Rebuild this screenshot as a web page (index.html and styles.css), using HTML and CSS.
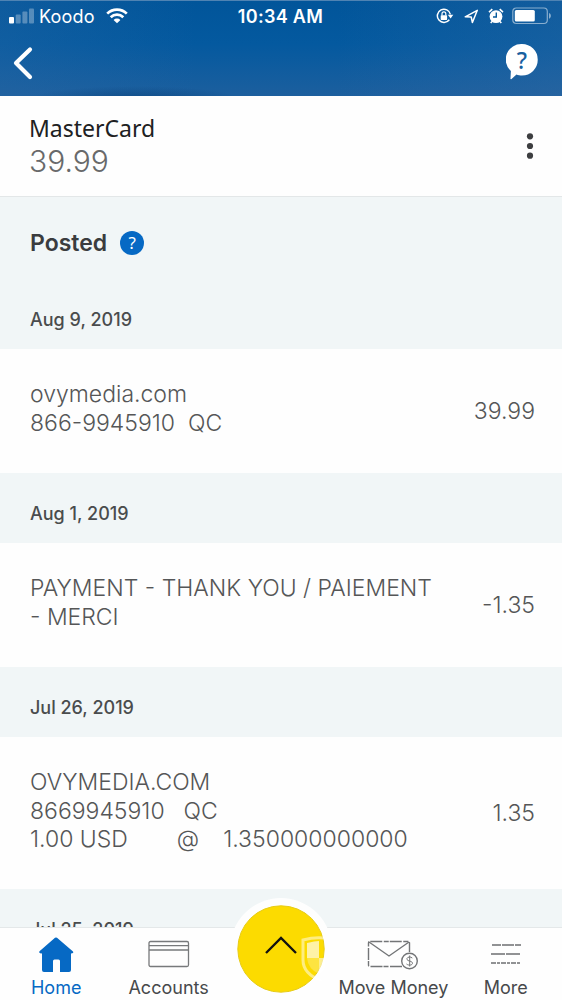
FILE: index.html
```html
<!DOCTYPE html>
<html lang="en">
<head>
<meta charset="utf-8">
<title>MasterCard</title>
<link rel="stylesheet" href="styles.css">
</head>
<body>
<div class="phone">
  <header class="top">
    <div class="status">
      <div class="carrier">
        <svg width="26" height="16" viewBox="0 0 26 16"><g fill="#fff"><rect y="9" width="5" height="6.500" rx="1"/><g opacity=".3"><rect x="6.700" y="6.500" width="5" height="9" rx="1"/><rect x="13.400" y="3.500" width="5" height="12" rx="1"/><rect x="20" y="0.500" width="5" height="15" rx="1"/></g></g></svg>
        <span class="network">Koodo</span>
        <svg class="wifi" width="22" height="16" viewBox="0 0 22 16" fill="none" stroke="#fff" stroke-width="2.700"><path d="M1.200 5.600a14 14 0 0 1 19.600 0M4.700 9.200a9 9 0 0 1 12.600 0"/><path d="M11 15.300 7.600 12a4.800 4.800 0 0 1 6.800 0z" fill="#fff" stroke="none"/></svg>
      </div>
      <time class="clock">10:34 AM</time>
      <div class="indicators">
        <svg width="18" height="16" viewBox="0 0 18 16"><path d="M13.300 11.700A6.600 6.600 0 1 1 14.400 6.300" fill="none" stroke="#fff" stroke-width="1.500"/><path d="M11.800 6.800h5.500l-2.700 3.600z" fill="#fff"/><rect x="4.700" y="7.200" width="6.400" height="4.700" rx=".6" fill="#fff"/><path d="M6 7.500V5.700a1.900 1.900 0 0 1 3.800 0v1.800" fill="none" stroke="#fff" stroke-width="1.200"/></svg>
        <svg class="arrow" width="15" height="15" viewBox="0 0 15 15" fill="none" stroke="#fff" stroke-width="1.500" stroke-linejoin="round"><path d="M1.200 7.800 13.300 1.300 8.400 13.500 7.200 8z"/></svg>
        <svg class="alarm" width="16" height="16" viewBox="0 0 16 16"><circle cx="8" cy="8.600" r="6.400" fill="#fff"/><path d="M1 4.200 4.300 1.200M11.700 1.200 15 4.200M4 13.400l-1.300 1.500M12 13.400l1.300 1.500" stroke="#fff" stroke-width="1.600"/><path d="M8.300 4.500V9H5" fill="none" stroke="#075a9c" stroke-width="1.400"/></svg>
        <svg width="40" height="18" viewBox="0 0 40 18"><rect x=".8" y="1" width="34.500" height="15.500" rx="3.500" fill="none" stroke="#fff" stroke-opacity=".5" stroke-width="1.200"/><rect x="2.800" y="3" width="20" height="11.500" rx="1.500" fill="#fff"/><path d="M37 6c2.500.7 2.500 5 0 5.700z" fill="#fff" opacity=".5"/></svg>
      </div>
    </div>
    <div class="toolbar">
      <svg width="20" height="34" viewBox="0 0 20 34" fill="none" stroke="#fff" stroke-width="4.200" stroke-linecap="round" stroke-linejoin="round"><path d="M17 3.500 3 17 17 31"/></svg>
      <div class="help">
        <svg width="32" height="37" viewBox="0 0 32 37"><path d="M16 1a15 15 0 0 1 0 31.500c-2 0-4-.3-5.500-1L5.500 36c-1 .5-1.200-.2-1-1l.4-7A15.500 15.500 0 0 1 16 1z" fill="#fff"/></svg>
        <span class="help-mark">?</span>
      </div>
    </div>
  </header>

  <section class="account">
    <div>
      <div class="account-name">MasterCard</div>
      <div class="balance">39.99</div>
    </div>
    <svg width="8" height="26" viewBox="0 0 8 26" fill="#3d3e40"><circle cx="4" cy="3.300" r="3.100"/><circle cx="4" cy="13" r="3.100"/><circle cx="4" cy="22.700" r="3.100"/></svg>
  </section>

  <main class="list">
    <div class="posted"><h1>Posted</h1><span class="info">?</span></div>
    <h2 class="date first">Aug 9, 2019</h2>
    <div class="row"><div class="desc"><span class="d1">ovymedia.com</span><span class="d2">866-9945910&nbsp; QC</span></div><div class="amount a1">39.99</div></div>
    <h2 class="date">Aug 1, 2019</h2>
    <div class="row"><div class="desc"><span class="d3">PAYMENT - THANK YOU / PAIEMENT</span><span class="d4">- MERCI</span></div><div class="amount a2">-1.35</div></div>
    <h2 class="date">Jul 26, 2019</h2>
    <div class="row tall"><div class="desc"><span class="d5">OVYMEDIA.COM</span><span class="d6">8669945910<span class="region">QC</span></span><span class="rate"><span class="d7">1.00 USD</span><span class="at">@</span><span class="d8">1.350000000000</span></span></div><div class="amount a3">1.35</div></div>
    <h2 class="date">Jul 25, 2019</h2>
  </main>

  <nav class="tabs">
    <a class="tab active"><svg width="36" height="36" viewBox="0 0 36 36"><path d="M17 .8q1-.8 2 0L35 14.500q1 1.300-.6 1.800L33 16.500V33q0 2-2 2h-9V24q0-1.500-1.500-1.500h-4Q15 22.500 15 24v11H6q-2 0-2-2V16.500l-2-.3Q.5 15.500 1.500 14.300z" fill="#0669c4"/></svg><span>Home</span></a>
    <a class="tab"><svg width="42" height="36" viewBox="0 0 42 36" fill="none" stroke="#77797b" stroke-width="1.300"><rect x="1" y="4.500" width="39.500" height="25" rx="1.500"/><path d="M1 8.700h39.500M1 13h39.500"/></svg><span>Accounts</span></a>
    <a class="tab center" aria-label="Open menu"><span class="fab"><svg width="88" height="88" viewBox="0 0 88 88"><circle cx="44" cy="44" r="43.200" fill="#fcdb00" stroke="#e7cc17"/><path d="m29 48 15-15 15 15" fill="none" stroke="#111" stroke-width="2.300"/><g fill="none" stroke="#fff" stroke-opacity=".5" stroke-width="3"><path d="M87 33q-10-1-21 2v20c0 10 8 17 19 21"/></g><path d="M70 38q8-2 12-2v17H70z" fill="#fff" opacity=".65"/><path d="M82 53h6v10q-3 5-6 6z" fill="#fff" opacity=".55"/><path d="M70 53h12v16q-11-5-12-16z" fill="#fff" opacity=".25"/></svg></span></a>
    <a class="tab"><svg width="52" height="36" viewBox="0 0 52 36" fill="none" stroke="#737577" stroke-width="1.400"><path d="M35 29.500H3q-1.500 0-1.500-1.500V6Q1.500 4.500 3 4.500h38q1.500 0 1.500 1.500v9" stroke-dasharray="12 1.500 5 1"/><path d="m2 5 20 14L42 5"/><circle cx="42.500" cy="24" r="7.800" fill="#fff"/><path d="M45.300 21c-2.500-2-6-.7-5.300 1.500.7 2 5 1 5.500 3.500.3 2-3.500 3-6 1M42.700 18.500v11" stroke-width="1"/></svg><span class="move">Move Money</span></a>
    <a class="tab"><svg width="32" height="36" viewBox="0 0 32 36" fill="none" stroke="#6d6f71" stroke-width="1.500"><path d="M2 8h29" stroke-dasharray="9 1 12 1"/><path d="M1 17h30" stroke-dasharray="14 1"/><path d="M1 26h30" stroke-dasharray="5 1 3 1"/></svg><span>More</span></a>
  </nav>
</div>
</body>
</html>
```
FILE: styles.css
```css
* { box-sizing: border-box; }
body { margin: 0; font-family: Inter, "Liberation Sans", sans-serif; background: #fff; }
svg { display: block; flex: none; }
.phone { width: 562px; height: 1000px; overflow: hidden; display: flex; flex-direction: column; }

.top { height: 96px; flex: none; border-top: 1px solid #4f83b3; background: radial-gradient(ellipse 105px 13px at 135px 98px, rgba(5,60,115,.55), transparent), linear-gradient(90deg, rgba(45,105,165,.3), transparent 35%, transparent 60%, rgba(60,110,165,.3)), linear-gradient(#01559a, #04599f 45%, #1c5f9e); color: #fff; }
.status { height: 30px; display: grid; grid-template-columns: 1fr auto 1fr; align-items: center; padding: 0 10px 0 9px; }
.carrier { display: flex; align-items: center; }
.network { font-size: 18px; margin-left: 4px; letter-spacing: .2px; }
.wifi { margin-left: 11px; }
.clock { font-size: 18px; font-weight: 600; letter-spacing: .3px; }
.indicators { display: flex; align-items: center; justify-content: flex-end; }
.arrow { margin-left: 10px; }
.alarm { margin: 0 8px 0 9px; }
.toolbar { display: flex; justify-content: space-between; align-items: flex-start; padding: 14px 24px 0 13px; }
.toolbar > svg { margin-top: 1px; }
.help { display: grid; margin-top: -2px; }
.help > * { grid-area: 1 / 1; }
.help-mark { color: #17609f; text-align: center; font: 500 23px/35px "Noto Sans", sans-serif; }

.account { height: 101px; flex: none; display: flex; justify-content: space-between; padding: 18px 28px 0 29px; border-bottom: 1px solid #e3e7e8; background: #fefefe; }
.account > svg { margin-top: 19px; }
.account-name { font: 400 23px/29px "Noto Sans", sans-serif; color: #202122; }
.balance { font-size: 30px; line-height: 36px; font-weight: 300; color: #68696a; }

.list { background: #f1f6f7; flex: 1; overflow: hidden; min-height: 0; }
.posted { display: flex; align-items: center; gap: 13px; height: 92px; padding-left: 30px; }
.posted h1 { margin: 0; font-size: 23px; font-weight: 600; color: #3a3c3e; }
.info { width: 24px; height: 24px; border-radius: 50%; background: #0669c4; color: #fff; text-align: center; font: 400 17px/24px "Noto Sans", sans-serif; }
.date { margin: 0; padding: 12px 30px 0; height: 70px; line-height: 58px; font-size: 18px; font-weight: 500; color: #4a4c4d; }
.date.first { height: 60px; padding-top: 2px; }
.row { height: 124px; display: flex; justify-content: space-between; padding: 31px 27px 0 30px; background: #fefefe; color: #555657; font-weight: 300; font-size: 23px; line-height: 28.500px; }
.row.tall { height: 152px; }
.desc { display: flex; flex-direction: column; align-items: flex-start; white-space: nowrap; }
.amount { margin-top: 17px; }
.tall .amount { margin-top: 31px; }
.region { margin-left: 19px; }
.rate { display: flex; }
.at { margin-left: 49px; }
.d8 { margin-left: 24px; }

.tabs { height: 73px; flex: none; display: grid; grid-template-columns: repeat(5, 1fr); border-top: 1px solid #e4e8e9; background: #fefefe; }
.tab { display: flex; flex-direction: column; align-items: center; padding-top: 9px; color: #47494b; font-size: 18px; line-height: 30px; white-space: nowrap; }
.active { color: #0669c4; }
.fab { width: 102px; height: 102px; border-radius: 50%; margin-top: -39px; background: #fefefe; padding: 7px; }
```
